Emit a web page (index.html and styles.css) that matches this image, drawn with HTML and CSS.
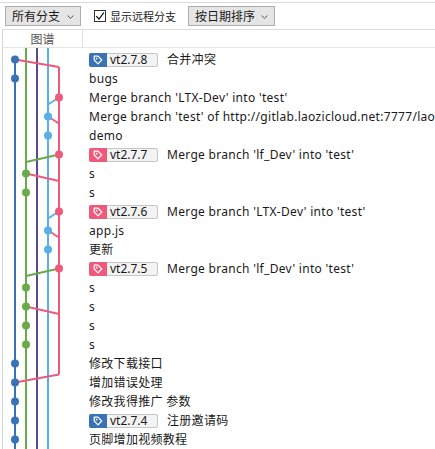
FILE: index.html
```html
<!DOCTYPE html>
<html lang="zh">
<head>
<meta charset="utf-8">
<link rel="stylesheet" href="styles.css">
</head>
<body>
<div class="app">
  <div class="toolbar">
    <div class="select select-branch"><span>所有分支</span><svg class="chev" width="7" height="4" viewBox="0 0 7 4"><path d="M0.5 0.5 L3.5 3.3 L6.5 0.5" fill="none" stroke="#555" stroke-width="1"/></svg></div>
    <label class="check"><span class="box"><svg width="10" height="10" viewBox="0 0 10 10"><path d="M1.2 5.2 L4 8 L8.8 1.6" fill="none" stroke="#111" stroke-width="1.2"/></svg></span><span class="check-label">显示远程分支</span></label>
    <div class="select select-sort"><span>按日期排序</span><svg class="chev" width="7" height="4" viewBox="0 0 7 4"><path d="M0.5 0.5 L3.5 3.3 L6.5 0.5" fill="none" stroke="#555" stroke-width="1"/></svg></div>
  </div>
  <div class="header">
    <div class="col-graph">图谱</div>
    <div class="col-msg"></div>
  </div>
  <div class="log">
    <svg class="graph" width="86" height="401" viewBox="3 48 86 401">
      <g fill="none" stroke-width="2">
        <line x1="15" y1="59.5" x2="15" y2="449" stroke="#3a73b5"/>
        <line x1="26" y1="48" x2="26" y2="449" stroke="#6aaa48"/>
        <line x1="37" y1="48" x2="37" y2="449" stroke="#5b4a8b"/>
        <line x1="48" y1="48" x2="48" y2="449" stroke="#5aafe6"/>
        <line x1="59" y1="67" x2="59" y2="374.5" stroke="#ef5a7c"/>
        <line x1="15" y1="59.5" x2="59" y2="67" stroke="#ef5a7c"/>
        <line x1="59" y1="97.5" x2="48" y2="104.5" stroke="#5aafe6"/>
        <line x1="48" y1="116.5" x2="59" y2="123.5" stroke="#ef5a7c"/>
        <line x1="59" y1="154.5" x2="26" y2="162" stroke="#6aaa48"/>
        <line x1="26" y1="173.5" x2="59" y2="181" stroke="#ef5a7c"/>
        <line x1="59" y1="211.5" x2="48" y2="218.5" stroke="#5aafe6"/>
        <line x1="48" y1="230.5" x2="59" y2="237.5" stroke="#ef5a7c"/>
        <line x1="59" y1="268.5" x2="26" y2="276" stroke="#6aaa48"/>
        <line x1="26" y1="306.5" x2="59" y2="314" stroke="#ef5a7c"/>
        <line x1="59" y1="374.5" x2="15" y2="382.5" stroke="#ef5a7c"/>
      </g>
      <g>
        <circle cx="15" cy="59.5" r="4" fill="#3a73b5"/>
        <circle cx="15" cy="78.5" r="4" fill="#3a73b5"/>
        <circle cx="59" cy="97.5" r="4" fill="#ef5a7c"/>
        <circle cx="48" cy="116.5" r="4" fill="#5aafe6"/>
        <circle cx="48" cy="135.5" r="4" fill="#5aafe6"/>
        <circle cx="59" cy="154.5" r="4" fill="#ef5a7c"/>
        <circle cx="26" cy="173.5" r="4" fill="#6aaa48"/>
        <circle cx="26" cy="192.5" r="4" fill="#6aaa48"/>
        <circle cx="59" cy="211.5" r="4" fill="#ef5a7c"/>
        <circle cx="48" cy="230.5" r="4" fill="#5aafe6"/>
        <circle cx="48" cy="249.5" r="4" fill="#5aafe6"/>
        <circle cx="59" cy="268.5" r="4" fill="#ef5a7c"/>
        <circle cx="26" cy="287.5" r="4" fill="#6aaa48"/>
        <circle cx="26" cy="306.5" r="4" fill="#6aaa48"/>
        <circle cx="26" cy="325.5" r="4" fill="#6aaa48"/>
        <circle cx="26" cy="344.5" r="4" fill="#6aaa48"/>
        <circle cx="15" cy="363.5" r="4" fill="#3a73b5"/>
        <circle cx="15" cy="382.5" r="4" fill="#3a73b5"/>
        <circle cx="15" cy="401.5" r="4" fill="#3a73b5"/>
        <circle cx="15" cy="420.5" r="4" fill="#3a73b5"/>
        <circle cx="15" cy="439.5" r="4" fill="#3a73b5"/>
      </g>
    </svg>
    <ul class="messages">
      <li><span class="tag tag-blue"><span class="tag-icon"><svg width="10" height="10" viewBox="0 0 10 10"><path d="M1.2 1.2 H5 L8.8 5 L5 8.8 L1.2 5 Z" fill="none" stroke="#fff" stroke-width="1.2" stroke-linejoin="round"/><circle cx="3.6" cy="3.6" r="0.9" fill="#fff"/></svg></span><span class="tag-name">vt2.7.8</span></span><span class="msg">合并冲突</span></li>
      <li><span class="msg">bugs</span></li>
      <li><span class="msg">Merge branch 'LTX-Dev' into 'test'</span></li>
      <li><span class="msg">Merge branch 'test' of http://gitlab.laozicloud.net:7777/laoz</span></li>
      <li><span class="msg">demo</span></li>
      <li><span class="tag tag-red"><span class="tag-icon"><svg width="10" height="10" viewBox="0 0 10 10"><path d="M1.2 1.2 H5 L8.8 5 L5 8.8 L1.2 5 Z" fill="none" stroke="#fff" stroke-width="1.2" stroke-linejoin="round"/><circle cx="3.6" cy="3.6" r="0.9" fill="#fff"/></svg></span><span class="tag-name">vt2.7.7</span></span><span class="msg">Merge branch 'lf_Dev' into 'test'</span></li>
      <li><span class="msg">s</span></li>
      <li><span class="msg">s</span></li>
      <li><span class="tag tag-red"><span class="tag-icon"><svg width="10" height="10" viewBox="0 0 10 10"><path d="M1.2 1.2 H5 L8.8 5 L5 8.8 L1.2 5 Z" fill="none" stroke="#fff" stroke-width="1.2" stroke-linejoin="round"/><circle cx="3.6" cy="3.6" r="0.9" fill="#fff"/></svg></span><span class="tag-name">vt2.7.6</span></span><span class="msg">Merge branch 'LTX-Dev' into 'test'</span></li>
      <li><span class="msg">app.js</span></li>
      <li><span class="msg">更新</span></li>
      <li><span class="tag tag-red"><span class="tag-icon"><svg width="10" height="10" viewBox="0 0 10 10"><path d="M1.2 1.2 H5 L8.8 5 L5 8.8 L1.2 5 Z" fill="none" stroke="#fff" stroke-width="1.2" stroke-linejoin="round"/><circle cx="3.6" cy="3.6" r="0.9" fill="#fff"/></svg></span><span class="tag-name">vt2.7.5</span></span><span class="msg">Merge branch 'lf_Dev' into 'test'</span></li>
      <li><span class="msg">s</span></li>
      <li><span class="msg">s</span></li>
      <li><span class="msg">s</span></li>
      <li><span class="msg">s</span></li>
      <li><span class="msg">修改下载接口</span></li>
      <li><span class="msg">增加错误处理</span></li>
      <li><span class="msg">修改我得推广 参数</span></li>
      <li><span class="tag tag-blue"><span class="tag-icon"><svg width="10" height="10" viewBox="0 0 10 10"><path d="M1.2 1.2 H5 L8.8 5 L5 8.8 L1.2 5 Z" fill="none" stroke="#fff" stroke-width="1.2" stroke-linejoin="round"/><circle cx="3.6" cy="3.6" r="0.9" fill="#fff"/></svg></span><span class="tag-name">vt2.7.4</span></span><span class="msg">注册邀请码</span></li>
      <li><span class="msg">页脚增加视频教程</span></li>
    </ul>
  </div>
</div>
</body>
</html>
```
FILE: styles.css
```css
* { box-sizing: border-box; }
html, body { margin: 0; padding: 0; background: #fff; }
body {
  font-family: "Noto Sans", "Noto Sans CJK SC", sans-serif;
  font-size: 12px;
  color: #1a1a1a;
  width: 435px;
  height: 449px;
  overflow: hidden;
}
.app { width: 435px; }
.toolbar {
  margin-top: 2px;
  border-top: 1px solid #dadada;
  padding: 3px 0 3px 5px;
  display: flex;
  align-items: center;
  height: 27px;
}
.select {
  height: 20px;
  background: #e5e5e5;
  border: 1px solid #adadad;
  display: flex;
  align-items: center;
  justify-content: space-between;
  padding: 0 6px 0 6px;
  font-family: "Noto Sans CJK SC", sans-serif;
  line-height: 18px;
}
.select-branch { width: 76px; }
.select-sort { width: 87px; margin-left: 12px; }
.chev { margin-top: 1px; }
.check {
  display: flex;
  align-items: center;
  margin-left: 13px;
  font-family: "Noto Sans CJK SC", sans-serif;
}
.check-label { font-size: 11px; }
.box {
  width: 12px;
  height: 12px;
  border: 1px solid #333;
  background: #fff;
  display: flex;
  align-items: center;
  justify-content: center;
  margin-right: 4px;
}
.header {
  display: flex;
  height: 19px;
  border-top: 1px solid #dcdcdc;
  border-bottom: 1px solid #e6e6e6;
  margin-left: 2px;
  border-left: 1px solid #d6d6d6;
}
.col-graph {
  width: 80px;
  border-right: 1px solid #e0e0e0;
  text-align: center;
  color: #555;
  line-height: 17px;
  font-family: "Noto Sans CJK SC", sans-serif;
}
.col-msg { flex: 1; }
.log {
  display: flex;
  margin-left: 2px;
  border-left: 1px solid #d6d6d6;
  height: 401px;
  overflow: hidden;
}
.graph { flex: none; display: block; }
.messages {
  list-style: none;
  margin: 0;
  padding: 2px 0 0 0;
  flex: 1;
  min-width: 0;
  overflow: hidden;
}
.messages li {
  height: 19px;
  display: flex;
  align-items: center;
  letter-spacing: 0.3px;
}
.msg {
  white-space: nowrap;
  line-height: 19px;
}
.tag {
  display: flex;
  align-items: center;
  width: 69px;
  height: 14px;
  border: 1px solid #c6c6c6;
  border-radius: 2px;
  background: #f3f3f3;
  margin-right: 9px;
  flex: none;
}
.tag-icon {
  width: 18px;
  height: 14px;
  margin-left: -1px;
  border-radius: 2px 0 0 2px;
  display: flex;
  align-items: center;
  justify-content: center;
}
.tag-blue .tag-icon { background: #3a73b5; }
.tag-red .tag-icon { background: #ef5a7c; }
.tag-name {
  padding-left: 3px;
  font-size: 12px;
  line-height: 14px;
  letter-spacing: 0;
}
```
